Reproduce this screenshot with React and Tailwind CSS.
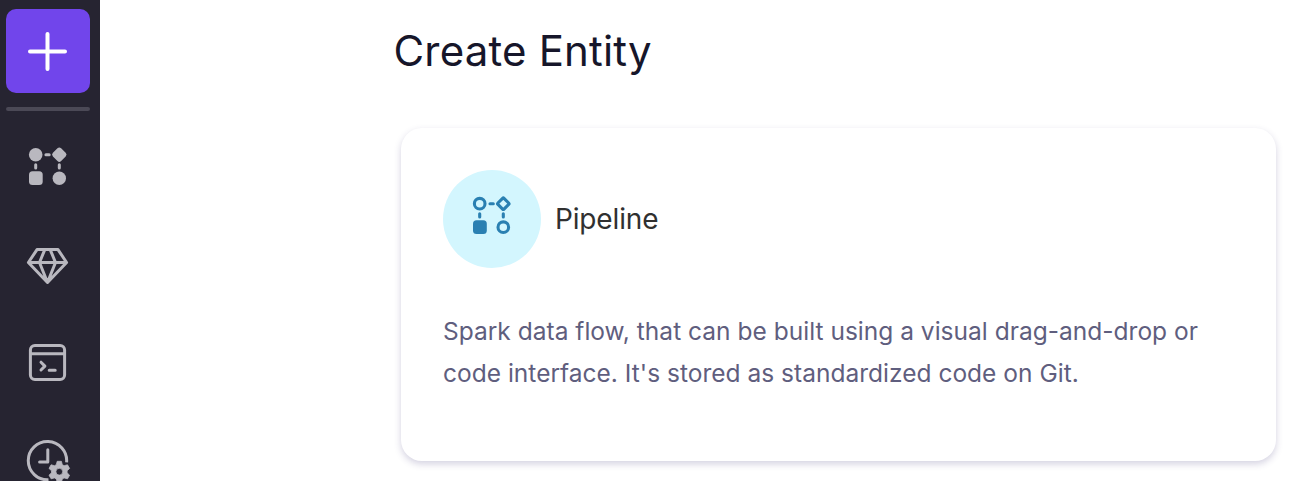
const iconClass = "block h-[50px] w-[50px] shrink-0";

function SidebarPipelineIcon() {
  return (
    <svg className={iconClass} viewBox="22 141 50 50" fill="currentColor" stroke="none">
      <circle cx="35.7" cy="154.7" r="6.8" />
      <rect x="53.5" y="148.9" width="11.6" height="11.6" rx="2.6" transform="rotate(45 59.3 154.7)" />
      <rect x="29" y="171.2" width="13.7" height="13.7" rx="3.5" />
      <circle cx="59.3" cy="178.2" r="6.7" />
      <path d="M45.9 154.7h3.3M35.7 164.8v3.2M59.3 164.8v3.2" stroke="currentColor" strokeWidth="3" strokeLinecap="round" />
    </svg>
  );
}

function GemIcon() {
  return (
    <svg className={iconClass} viewBox="22 241 50 50" fill="none" stroke="currentColor" strokeWidth="3" strokeLinejoin="round">
      <path d="M37 249.6h21l8.6 12.9L47.5 282.5 28.4 262.5ZM28.4 262.5h38.2M44.8 249.6l-5.3 12.9 8 20 8-20-5.3-12.9" />
    </svg>
  );
}

function TerminalIcon() {
  return (
    <svg className={iconClass} viewBox="22 338 50 50" fill="none" stroke="currentColor" strokeWidth="3" strokeLinecap="round" strokeLinejoin="round">
      <rect x="30.4" y="345.6" width="34.2" height="34" rx="4.5" />
      <path d="M30.4 353.8h34.2M41 362.2l3.9 3.9-3.9 3.9M49.2 370.2h6" />
    </svg>
  );
}

function ClockGearIcon() {
  return (
    <svg className={iconClass} viewBox="22 436 50 50" fill="none" stroke="currentColor" strokeWidth="3" strokeLinecap="butt">
      <path d="M66.6 462.3A19.2 19.2 0 1 0 48.5 479.8" />
      <path d="M47.8 449.8v12.3h-8.2" strokeLinecap="round" strokeLinejoin="round" />
      <path
        fill="currentColor"
        stroke="currentColor"
        strokeWidth="0.8"
        strokeLinejoin="round"
        fillRule="evenodd"
        d="M57.2 461.3h4.2l.9 3.4 1.8 1 3.4-.9 2.1 3.6-2.5 2.4v2l2.5 2.4-2.1 3.6-3.4-.9-1.8 1-.9 3.4h-4.2l-.9-3.4-1.8-1-3.4.9-2.1-3.6 2.5-2.4v-2l-2.5-2.4 2.1-3.6 3.4.9 1.8-1ZM59.3 468.3a3.4 3.4 0 1 0 0 6.8 3.4 3.4 0 0 0 0-6.8Z"
      />
    </svg>
  );
}

function PipelineIcon() {
  return (
    <svg className="block h-full w-full" viewBox="443 170 98 98" fill="none" stroke="#2a80b2" strokeWidth="3.1">
      <circle cx="479.7" cy="203.7" r="5.3" />
      <rect x="499" y="199.4" width="8.6" height="8.6" rx="1" transform="rotate(45 503.3 203.7)" />
      <rect x="473" y="220.3" width="13.8" height="13.6" rx="3.5" fill="#2a80b2" stroke="none" />
      <circle cx="503.3" cy="227.2" r="5.3" />
      <path d="M490 203.7h3.3M479.7 213.8v3.2M503.3 213.8v3.2" strokeLinecap="round" />
    </svg>
  );
}

export default function App() {
  return (
    <div className="flex h-[481px] w-[1302px] overflow-hidden bg-white font-['Inter',sans-serif]">
      <nav className="flex w-[100px] shrink-0 flex-col bg-[#262431] pt-[9px] pl-[6px] text-[#b9b8bf]">
        <button aria-label="Create" className="flex h-[84px] w-[84px] shrink-0 items-center justify-center rounded-[10px] bg-[#7145eb] text-white">
          <svg className="h-[84px] w-[84px]" viewBox="6 9 84 84" fill="none" stroke="currentColor" strokeWidth="4" strokeLinecap="round">
            <path d="M30 51.5h35M47.5 34v35" />
          </svg>
        </button>
        <div className="mt-[14px] h-1 w-[84px] shrink-0 rounded-full bg-[#4b4956]" />
        <div className="mt-[30px] ml-4 flex flex-col">
          <SidebarPipelineIcon />
          <div className="mt-[50px]"><GemIcon /></div>
          <div className="mt-[47px]"><TerminalIcon /></div>
          <div className="mt-[48px]"><ClockGearIcon /></div>
        </div>
      </nav>
      <main className="min-w-0 flex-1 pl-[293.5px]">
        <h1 className="mt-[26px] text-[42px] leading-[50px] font-normal tracking-[0.18px] text-[#16162a]">Create Entity</h1>
        <section className="mt-[52px] ml-[7.5px] h-[333px] w-[875px] rounded-[21px] bg-white px-[42px] pt-[42px] shadow-[0_3px_7px_rgba(60,50,120,0.22)]">
          <div className="flex items-center gap-[14px]">
            <div className="h-[98px] w-[98px] rounded-full bg-[#d3f6fe]"><PipelineIcon /></div>
            <h2 className="text-[28px] leading-[42px] font-normal tracking-[-0.15px] text-[#303030]">Pipeline</h2>
          </div>
          <p className="mt-[42px] text-[24.5px] leading-[42px] font-normal tracking-[0.012px] whitespace-nowrap text-[#5f5e7e]">
            Spark data flow, that can be built using a visual drag-and-drop or<br />
            code interface. It's stored as standardized code on Git.
          </p>
        </section>
      </main>
    </div>
  );
}
